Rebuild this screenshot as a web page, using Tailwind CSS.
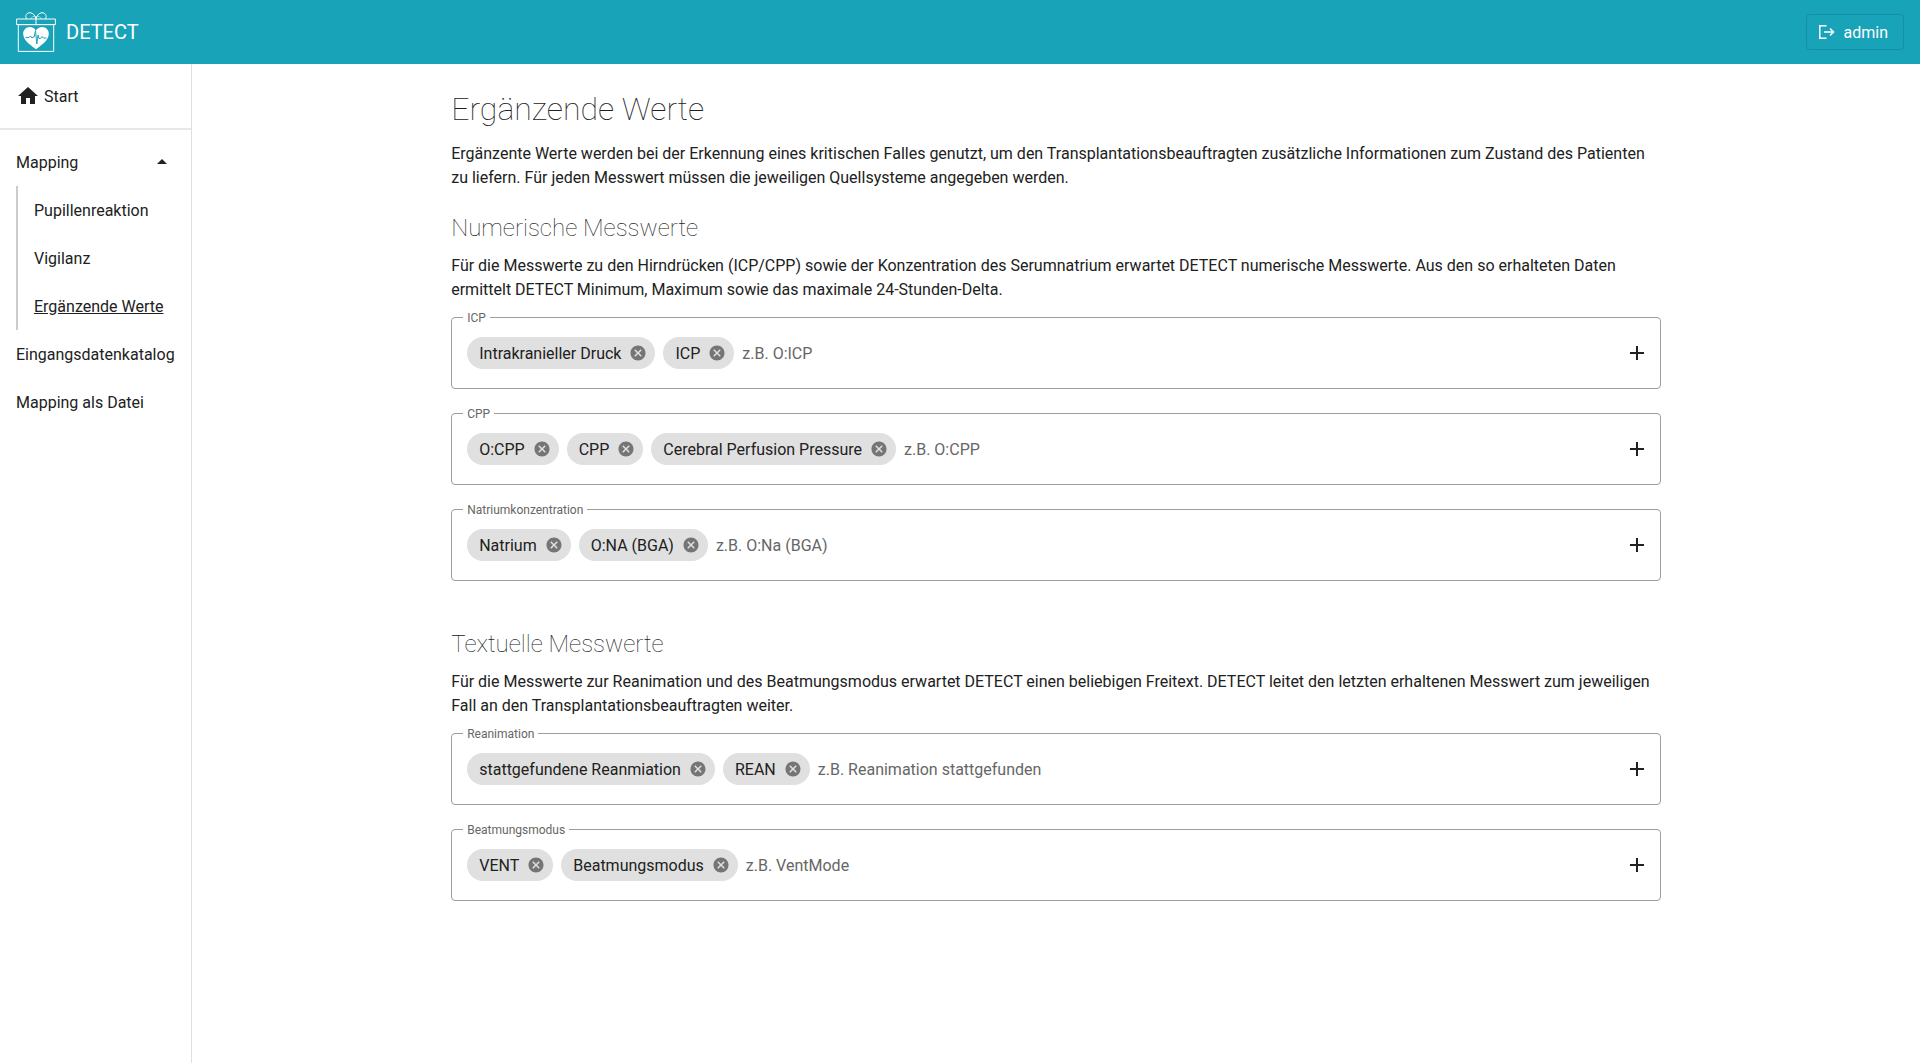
<!DOCTYPE html>
<html lang="de">
<head>
    <meta charset="utf-8">
    <meta name="viewport" content="width=device-width, initial-scale=1">
    <title>DETECT – Ergänzende Werte</title>
    <script src="https://cdn.jsdelivr.net/npm/@tailwindcss/browser@4"></script>
</head>
<body class="min-h-screen flex flex-col bg-white font-[Roboto,sans-serif] text-base text-[#212121]">

<!-- Icons used more than once -->
<svg class="hidden" aria-hidden="true">
    <symbol id="icon-cancel" viewBox="0 0 24 24">
        <path d="M12 2C6.47 2 2 6.47 2 12s4.47 10 10 10 10-4.47 10-10S17.53 2 12 2zm5 13.59L15.59 17 12 13.41 8.41 17 7 15.59 10.59 12 7 8.41 8.41 7 12 10.59 15.59 7 17 8.41 13.41 12 17 15.59z"/>
    </symbol>
    <symbol id="icon-add" viewBox="0 0 24 24">
        <path d="M19 13h-6v6h-2v-6H5v-2h6V5h2v6h6v2z"/>
    </symbol>
</svg>

<header class="h-16 px-4 flex items-center justify-between bg-[#18a3b9] text-white">
    <a href="#" class="flex items-center gap-[10px] text-xl">
        <svg class="size-10" viewBox="0 0 40 40" fill="none" stroke="currentColor" aria-hidden="true">
            <path d="M.6 7h38.8v5.6H.6zM2.3 12.6h35.4v26.8H2.3z"/>
            <path d="M20 7v5.6M10.600 7C8.600 3.400 11 .6 14 .7c3.200.2 5.200 3 6 6.300.8-3.300 2.800-6.100 6-6.300 3-.1 5.400 2.700 3.400 6.300"/>
            <path d="M14.600 7c1-2.400 3-3.200 5.400-2.200 2.400-1 4.400-.2 5.400 2.200" stroke-width=".5"/>
            <path fill="currentColor" stroke="none" d="M20 37.200C12.500 32 7.200 27.500 7.200 21.800c0-4 2.900-6.800 6.600-6.800 2.600 0 4.900 1.300 6.200 3.500 1.300-2.200 3.600-3.500 6.200-3.500 3.700 0 6.600 2.800 6.600 6.800 0 5.700-5.300 10.200-12.800 15.400z"/>
            <path class="stroke-[#18a3b9]" stroke-linejoin="round" d="M9.500 25.500h3.500l1.500-1.500 1.500 2 1-1h1.200l1.300-6.500 1.300 13.500 1.200-9 1 3.500h1.500l1.500-2 1.500 1.500h3"/>
        </svg>
        DETECT
    </a>
    <button type="button" class="h-9 pl-[11px] pr-[15px] flex items-center gap-2 rounded border border-black/12">
        <svg class="size-[18px]" viewBox="0 0 18 18" fill="none" stroke="currentColor" stroke-width="1.500" aria-hidden="true">
            <path d="M8.500 2.700H1.800v12.600h6.700M6 9h9.500M12 5.500 15.500 9 12 12.500"/>
        </svg>
        <span class="pt-0.5">admin</span>
    </button>
</header>

<div class="flex-1 flex">
    <nav class="w-48 shrink-0 border-r border-[#e0e0e0]">
        <a href="#" class="h-16 px-4 flex items-center gap-1 border-b-2 border-[#e5e9ed] box-content">
            <svg class="size-6" viewBox="0 0 24 24" fill="currentColor" aria-hidden="true">
                <path d="M10 20v-6h4v6h5v-8h3L12 3 2 12h3v8z"/>
            </svg>
            <span class="pt-0.5">Start</span>
        </a>
        <div class="pt-2">
            <button type="button" aria-expanded="true" class="w-full h-12 pl-4 pr-[17px] flex items-center justify-between">
                <span class="pt-0.5">Mapping</span>
                <svg class="size-6" viewBox="0 0 24 24" fill="currentColor" aria-hidden="true">
                    <path d="M7 14l5-5 5 5z"/>
                </svg>
            </button>
            <div class="ml-4 border-l-2 border-[#ccc]">
                <a href="#" class="h-12 pt-0.5 pl-4 flex items-center">Pupillenreaktion</a>
                <a href="#" class="h-12 pt-0.5 pl-4 flex items-center">Vigilanz</a>
                <a href="#" aria-current="page" class="h-12 pt-0.5 pl-4 flex items-center underline">Ergänzende Werte</a>
            </div>
            <a href="#" class="h-12 pt-0.5 px-4 flex items-center">Eingangsdatenkatalog</a>
            <a href="#" class="h-12 pt-0.5 px-4 flex items-center">Mapping als Datei</a>
        </div>
    </nav>

    <main class="flex-1 pt-6 pb-10">
        <div class="w-[70%] mx-auto">
            <h1 class="mb-3 text-[32px] leading-[42px] font-thin">Ergänzende Werte</h1>
            <p>
                Ergänzente Werte werden bei der Erkennung eines kritischen Falles genutzt, um den Transplantationsbeauftragten
                zusätzliche Informationen zum Zustand des Patienten zu liefern. Für jeden Messwert müssen die jeweiligen
                Quellsysteme angegeben werden.
            </p>

            <section class="mt-6">
                <h2 class="mb-3 text-2xl leading-7 font-thin">Numerische Messwerte</h2>
                <p class="mb-1.5">
                    Für die Messwerte zu den Hirndrücken (ICP/CPP) sowie der Konzentration des Serumnatrium erwartet DETECT
                    numerische Messwerte. Aus den so erhalteten Daten ermittelt DETECT Minimum, Maximum sowie das maximale
                    24-Stunden-Delta.
                </p>

                <div class="flex flex-col gap-[15px]">
                    <fieldset class="px-[11px] border border-[#9e9e9e] rounded">
                        <legend class="pt-0.5 px-1 text-xs leading-4 text-[#666]"><label for="icp">ICP</label></legend>
                        <div class="pl-1 pt-[11px] pb-[19px] flex items-center gap-2">
                            <span class="h-8 pl-3 pr-2 flex items-center gap-2 rounded-full bg-[#e0e0e0]">
                                <span class="pt-0.5">Intrakranieller Druck</span>
                                <button type="button" aria-label="Intrakranieller Druck entfernen" class="text-[#757575]"><svg class="size-[18px]" fill="currentColor"><use href="#icon-cancel"/></svg></button>
                            </span>
                            <span class="h-8 pl-3 pr-2 flex items-center gap-2 rounded-full bg-[#e0e0e0]">
                                <span class="pt-0.5">ICP</span>
                                <button type="button" aria-label="ICP entfernen" class="text-[#757575]"><svg class="size-[18px]" fill="currentColor"><use href="#icon-cancel"/></svg></button>
                            </span>
                            <input id="icp" type="text" placeholder="z.B. O:ICP" class="flex-1 min-w-0 pt-0.5 outline-none placeholder:text-[#666]">
                            <button type="button" aria-label="ICP hinzufügen"><svg class="size-6" fill="currentColor"><use href="#icon-add"/></svg></button>
                        </div>
                    </fieldset>

                    <fieldset class="px-[11px] border border-[#9e9e9e] rounded">
                        <legend class="pt-0.5 px-1 text-xs leading-4 text-[#666]"><label for="cpp">CPP</label></legend>
                        <div class="pl-1 pt-[11px] pb-[19px] flex items-center gap-2">
                            <span class="h-8 pl-3 pr-2 flex items-center gap-2 rounded-full bg-[#e0e0e0]">
                                <span class="pt-0.5">O:CPP</span>
                                <button type="button" aria-label="O:CPP entfernen" class="text-[#757575]"><svg class="size-[18px]" fill="currentColor"><use href="#icon-cancel"/></svg></button>
                            </span>
                            <span class="h-8 pl-3 pr-2 flex items-center gap-2 rounded-full bg-[#e0e0e0]">
                                <span class="pt-0.5">CPP</span>
                                <button type="button" aria-label="CPP entfernen" class="text-[#757575]"><svg class="size-[18px]" fill="currentColor"><use href="#icon-cancel"/></svg></button>
                            </span>
                            <span class="h-8 pl-3 pr-2 flex items-center gap-2 rounded-full bg-[#e0e0e0]">
                                <span class="pt-0.5">Cerebral Perfusion Pressure</span>
                                <button type="button" aria-label="Cerebral Perfusion Pressure entfernen" class="text-[#757575]"><svg class="size-[18px]" fill="currentColor"><use href="#icon-cancel"/></svg></button>
                            </span>
                            <input id="cpp" type="text" placeholder="z.B. O:CPP" class="flex-1 min-w-0 pt-0.5 outline-none placeholder:text-[#666]">
                            <button type="button" aria-label="CPP hinzufügen"><svg class="size-6" fill="currentColor"><use href="#icon-add"/></svg></button>
                        </div>
                    </fieldset>

                    <fieldset class="px-[11px] border border-[#9e9e9e] rounded">
                        <legend class="pt-0.5 px-1 text-xs leading-4 text-[#666]"><label for="natrium">Natriumkonzentration</label></legend>
                        <div class="pl-1 pt-[11px] pb-[19px] flex items-center gap-2">
                            <span class="h-8 pl-3 pr-2 flex items-center gap-2 rounded-full bg-[#e0e0e0]">
                                <span class="pt-0.5">Natrium</span>
                                <button type="button" aria-label="Natrium entfernen" class="text-[#757575]"><svg class="size-[18px]" fill="currentColor"><use href="#icon-cancel"/></svg></button>
                            </span>
                            <span class="h-8 pl-3 pr-2 flex items-center gap-2 rounded-full bg-[#e0e0e0]">
                                <span class="pt-0.5">O:NA (BGA)</span>
                                <button type="button" aria-label="O:NA (BGA) entfernen" class="text-[#757575]"><svg class="size-[18px]" fill="currentColor"><use href="#icon-cancel"/></svg></button>
                            </span>
                            <input id="natrium" type="text" placeholder="z.B. O:Na (BGA)" class="flex-1 min-w-0 pt-0.5 outline-none placeholder:text-[#666]">
                            <button type="button" aria-label="Natriumkonzentration hinzufügen"><svg class="size-6" fill="currentColor"><use href="#icon-add"/></svg></button>
                        </div>
                    </fieldset>
                </div>
            </section>

            <section class="mt-[49px]">
                <h2 class="mb-3 text-2xl leading-7 font-thin">Textuelle Messwerte</h2>
                <p class="mb-1.5">
                    Für die Messwerte zur Reanimation und des Beatmungsmodus erwartet DETECT einen beliebigen Freitext. DETECT
                    leitet den letzten erhaltenen Messwert zum jeweiligen Fall an den Transplantationsbeauftragten weiter.
                </p>

                <div class="flex flex-col gap-[15px]">
                    <fieldset class="px-[11px] border border-[#9e9e9e] rounded">
                        <legend class="pt-0.5 px-1 text-xs leading-4 text-[#666]"><label for="reanimation">Reanimation</label></legend>
                        <div class="pl-1 pt-[11px] pb-[19px] flex items-center gap-2">
                            <span class="h-8 pl-3 pr-2 flex items-center gap-2 rounded-full bg-[#e0e0e0]">
                                <span class="pt-0.5">stattgefundene Reanmiation</span>
                                <button type="button" aria-label="stattgefundene Reanmiation entfernen" class="text-[#757575]"><svg class="size-[18px]" fill="currentColor"><use href="#icon-cancel"/></svg></button>
                            </span>
                            <span class="h-8 pl-3 pr-2 flex items-center gap-2 rounded-full bg-[#e0e0e0]">
                                <span class="pt-0.5">REAN</span>
                                <button type="button" aria-label="REAN entfernen" class="text-[#757575]"><svg class="size-[18px]" fill="currentColor"><use href="#icon-cancel"/></svg></button>
                            </span>
                            <input id="reanimation" type="text" placeholder="z.B. Reanimation stattgefunden" class="flex-1 min-w-0 pt-0.5 outline-none placeholder:text-[#666]">
                            <button type="button" aria-label="Reanimation hinzufügen"><svg class="size-6" fill="currentColor"><use href="#icon-add"/></svg></button>
                        </div>
                    </fieldset>

                    <fieldset class="px-[11px] border border-[#9e9e9e] rounded">
                        <legend class="pt-0.5 px-1 text-xs leading-4 text-[#666]"><label for="beatmung">Beatmungsmodus</label></legend>
                        <div class="pl-1 pt-[11px] pb-[19px] flex items-center gap-2">
                            <span class="h-8 pl-3 pr-2 flex items-center gap-2 rounded-full bg-[#e0e0e0]">
                                <span class="pt-0.5">VENT</span>
                                <button type="button" aria-label="VENT entfernen" class="text-[#757575]"><svg class="size-[18px]" fill="currentColor"><use href="#icon-cancel"/></svg></button>
                            </span>
                            <span class="h-8 pl-3 pr-2 flex items-center gap-2 rounded-full bg-[#e0e0e0]">
                                <span class="pt-0.5">Beatmungsmodus</span>
                                <button type="button" aria-label="Beatmungsmodus entfernen" class="text-[#757575]"><svg class="size-[18px]" fill="currentColor"><use href="#icon-cancel"/></svg></button>
                            </span>
                            <input id="beatmung" type="text" placeholder="z.B. VentMode" class="flex-1 min-w-0 pt-0.5 outline-none placeholder:text-[#666]">
                            <button type="button" aria-label="Beatmungsmodus hinzufügen"><svg class="size-6" fill="currentColor"><use href="#icon-add"/></svg></button>
                        </div>
                    </fieldset>
                </div>
            </section>
        </div>
    </main>
</div>

</body>
</html>
